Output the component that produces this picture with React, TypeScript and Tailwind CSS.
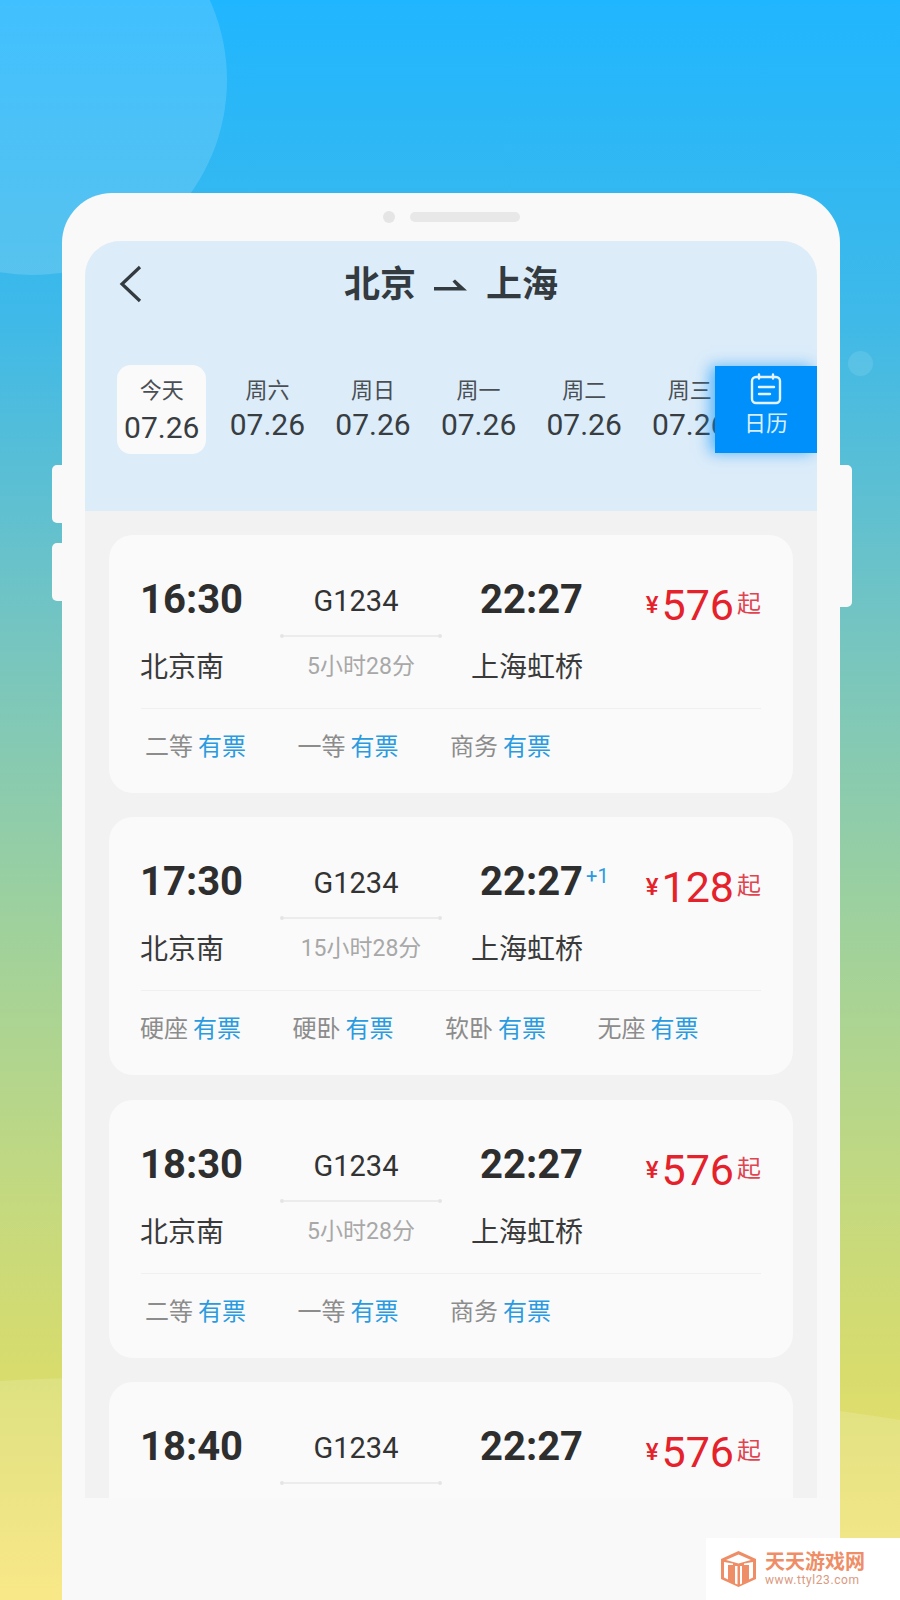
const trains = [
  { dep: '16:30', dur: '5小时28分', price: '576', seats: ['二等', '一等', '商务'] },
  { dep: '17:30', dur: '15小时28分', price: '128', seats: ['硬座', '硬卧', '软卧', '无座'], nextDay: true },
  { dep: '18:30', dur: '5小时28分', price: '576', seats: ['二等', '一等', '商务'] },
  // last card runs off the bottom of the screen, only its first row shows
  { dep: '18:40', dur: '', price: '576', seats: [] as string[] },
];

const days = ['今天', '周六', '周日', '周一', '周二', '周三'];

function TrainCard({ train }: { train: (typeof trains)[number] }) {
  const full = train.seats.length > 0;

  return (
    <div className="h-[258px] shrink-0 rounded-[24px] bg-[#fafafa] px-[32px] pt-[41px]">
      <div className="flex h-[112px] items-start">
        <div className="w-[139px] shrink-0">
          <div className="-ml-[1px] text-[40px] leading-[48px] font-bold text-[#2e2e2e]">{train.dep}</div>
          {full && <div className="mt-[24px] -ml-[1px] text-[28px] leading-[40px] text-[#3a3a3a]">北京南</div>}
        </div>
        <div className="flex w-[162px] shrink-0 flex-col items-center pt-[5px]">
          <div className="pr-[10px] text-[29px] leading-[40px] text-[#333333]">G1234</div>
          <div className="mt-[13px] flex w-full items-center">
            <div className="h-[4px] w-[4px] rounded-full bg-[#e4e4e4]" />
            <div className="h-[2px] flex-1 bg-[#ececec]" />
            <div className="h-[4px] w-[4px] rounded-full bg-[#e4e4e4]" />
          </div>
          {full && <div className="mt-[13px] text-[23px] leading-[32px] text-[#a8a8a8]">{train.dur}</div>}
        </div>
        <div className="w-[170px] shrink-0">
          <div className="flex items-start pl-[38px]">
            <span className="text-[40px] leading-[48px] font-bold text-[#2e2e2e]">22:27</span>
            {train.nextDay && <span className="mt-[6px] ml-[3px] text-[20px] leading-[24px] text-[#2a9be0]">+1</span>}
          </div>
          {full && <div className="mt-[24px] pl-[29px] text-[28px] leading-[40px] text-[#3a3a3a]">上海虹桥</div>}
        </div>
        <div className="flex flex-1 items-center justify-end gap-[3px] pt-[5px] text-[#e5222b]">
          <span className="text-[24px] leading-[48px] font-medium">¥</span>
          <span className="text-[43px] leading-[48px]">{train.price}</span>
          <span className="-translate-y-[1px] text-[24px] leading-[48px] text-[#e04450]">起</span>
        </div>
      </div>
      {full && (
        <>
          <div className="mt-[20px] h-px bg-[#f0f0f0]" />
          <div className={`mt-[22px] flex ${train.seats.length === 3 ? 'pl-[4px]' : '-ml-[1px]'}`}>
            {train.seats.map((seat) => (
              <div key={seat} className="flex w-[152.5px] shrink-0 gap-[5px] text-[24px] leading-[32px]">
                <span className="text-[#8c8c8c]">{seat}</span>
                <span className="text-[#2a9be0]">有票</span>
              </div>
            ))}
          </div>
        </>
      )}
    </div>
  );
}

export default function App() {
  return (
    <div className="relative h-[1600px] w-[900px] overflow-hidden bg-[linear-gradient(180deg,#20b6ff_0%,#3fb9e8_20%,#76c5c0_40%,#9fd19c_58%,#c4d97f_75%,#d8dc6c_86%,#f8e474_100%)] pt-[193px] pl-[62px] font-['Roboto','Noto_Sans_CJK_SC',sans-serif]">
      {/* background shapes */}
      <div className="absolute top-[-115px] left-[-163px] h-[390px] w-[390px] rounded-full bg-white/15" />
      <div className="absolute top-[1375px] left-[-750px] h-[374px] w-[2000px] rounded-[50%] bg-white/15" />
      <div className="absolute top-[351px] left-[848px] h-[25px] w-[25px] rounded-full bg-white/10" />

      {/* phone side buttons */}
      <div className="absolute top-[465px] left-[52px] h-[58px] w-[12px] rounded-l-[5px] bg-[#f9f9f9]" />
      <div className="absolute top-[543px] left-[52px] h-[58px] w-[12px] rounded-l-[5px] bg-[#f9f9f9]" />
      <div className="absolute top-[465px] left-[838px] h-[142px] w-[14px] rounded-r-[5px] bg-[#f9f9f9]" />

      <div className="relative h-[1407px] w-[778px] rounded-t-[50px] bg-[#f9f9f9] px-[23px]">
        <div className="flex h-[48px] items-center justify-center gap-[15px]">
          <div className="h-[12px] w-[12px] rounded-full bg-[#e5e5e5]" />
          <div className="h-[10px] w-[110px] rounded-full bg-[#e8e8e8]" />
        </div>

        <div className="h-[1257px] overflow-hidden rounded-t-[35px] bg-[#f2f2f2]">
          <div className="relative h-[270px] overflow-hidden bg-[#dcecf9]">
            <div className="flex h-[88px] items-center justify-center text-[36px] leading-none font-bold text-[#333a40]">
              <svg width="38" height="38" viewBox="0 0 38 38" fill="none" stroke="#333a40" strokeWidth="3.2" className="absolute top-[24px] left-[30px]">
                <path d="M25 2 L7 19 L25 36" />
              </svg>
              <span>北京</span>
              <svg width="34" height="12" viewBox="0 0 34 12" fill="#333a40" className="mx-[18px]">
                <path d="M0 8h23.500l-5-5.500 2.500-2L33 11.500H0z" />
              </svg>
              <span>上海</span>
            </div>

            <div className="mt-[36px] flex pl-[24px]">
              {days.map((day, i) => (
                <div key={day} className="flex w-[105.6px] shrink-0 justify-center">
                  <div className={`flex h-[89px] w-[89px] flex-col items-center rounded-[14px] pt-[11px] ${i === 0 ? 'bg-[#fafafa]' : ''}`}>
                    <div className="text-[22px] leading-[30px] text-[#4a4f55]">{day}</div>
                    <div className={`text-[30px] leading-[36px] text-[#383d42] ${i === 0 ? 'mt-[4px]' : 'mt-[1px]'}`}>07.26</div>
                  </div>
                </div>
              ))}
            </div>

            <div className="absolute top-[125px] right-0 flex h-[87px] w-[102px] flex-col items-center bg-[#0090fb] pt-[7px] shadow-[-5px_0_14px_rgba(0,144,251,0.6)]">
              <svg width="34" height="32" viewBox="0 0 34 32" fill="none" stroke="#e4f3ff" strokeWidth="2.4" strokeLinecap="round">
                <rect x="3" y="4" width="28" height="26" rx="4" />
                <path d="M10 1.500v4M24 1.500v4M10 14h15M10 21h11" />
              </svg>
              <div className="mt-[4px] text-[22px] leading-[30px] text-[#d8eeff]">日历</div>
            </div>
          </div>

          <div className="flex flex-col gap-[24.3px] px-[24px] pt-[24px]">
            {trains.map((train) => (
              <TrainCard key={train.dep} train={train} />
            ))}
          </div>
        </div>
      </div>

      {/* watermark */}
      <div className="absolute right-0 bottom-0 flex h-[62px] w-[194px] items-center gap-[9px] bg-white pl-[15px]">
        <svg width="35" height="36" viewBox="0 0 35 36" fill="#ee8d66" className="shrink-0">
          <path d="M17.500 0 35 8v20l-17.500 8L0 28V8zM17.500 3.500 5 9l12.500 3.500L30 9zM3 11v15.500l4 2V14h5v-1.500zM14 15v17.500l2.500 1V15zM19 15v18.500l2-1V15zM23 12.500V14h5v14.500l4-2V11z" fillRule="evenodd" />
        </svg>
        <div className="flex flex-col">
          <div className="text-[20px] leading-[22px] font-bold text-[#ee8d66]">天天游戏网</div>
          <div className="text-[12px] leading-[15px] tracking-[0.6px] text-[#d99a80]">www.ttyl23.com</div>
        </div>
      </div>
    </div>
  );
}
